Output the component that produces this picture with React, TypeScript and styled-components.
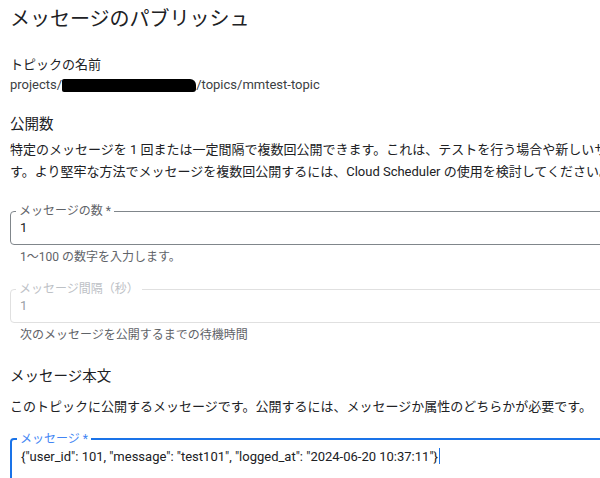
import styled, { createGlobalStyle } from 'styled-components';

const GlobalStyle = createGlobalStyle`
  html, body {
    margin: 0;
    padding: 0;
    background: #fff;
    overflow: hidden;
  }
  body {
    font-family: Roboto, "Noto Sans CJK JP", sans-serif;
    color: #202124;
  }
`;

const Page = styled.div`
  width: 720px;
  padding: 5px 0 0 10px;
  display: flex;
  flex-direction: column;
`;

const Title = styled.h1`
  margin: 0;
  font-size: 20px;
  line-height: 28px;
  font-weight: 400;
`;

const FieldName = styled.div`
  margin-top: 22px;
  font-size: 13px;
  line-height: 20px;
`;

const FieldValue = styled.div`
  font-size: 13px;
  line-height: 20px;
  color: #3c4043;
  display: flex;
  align-items: center;
`;

const Redacted = styled.span`
  display: inline-block;
  width: 134px;
  height: 13px;
  margin-top: 1px;
  background: #000;
  border-radius: 2px 6px 3px 2px;
`;

const SectionTitle = styled.h2<{ $gap: number }>`
  margin: ${(p) => p.$gap}px 0 0;
  font-size: 14.5px;
  line-height: 24px;
  font-weight: 400;
`;

const Description = styled.p<{ $gap?: number }>`
  margin: ${(p) => p.$gap ?? 2}px 0 0;
  font-size: 13px;
  line-height: 22px;
  white-space: nowrap;
`;

const Outline = styled.fieldset<{ $state: 'normal' | 'disabled' | 'focused'; $gap: number }>`
  margin: ${(p) => p.$gap}px 0 0;
  width: 700px;
  box-sizing: border-box;
  padding: 0 9px ${(p) => (p.$state === 'focused' ? 22 : 8)}px;
  border-radius: 4px;
  border: ${(p) =>
    p.$state === 'focused'
      ? '2px solid #1a73e8'
      : p.$state === 'disabled'
        ? '1px solid #e0e0e0'
        : '1px solid #80868b'};
`;

const Legend = styled.legend<{ $state: 'normal' | 'disabled' | 'focused' }>`
  padding: 0 3px;
  margin-left: -4px;
  font-size: 12px;
  line-height: 14px;
  color: ${(p) =>
    p.$state === 'focused' ? '#4285f4' : p.$state === 'disabled' ? '#bdc1c6' : '#5f6368'};
`;

const InputText = styled.div<{ $disabled?: boolean }>`
  margin-top: 2px;
  font-size: 13px;
  line-height: 16px;
  white-space: nowrap;
  color: ${(p) => (p.$disabled ? '#9aa0a6' : '#202124')};
`;

const Caret = styled.span`
  display: inline-block;
  width: 1px;
  height: 16px;
  margin-left: 1px;
  vertical-align: -3px;
  background: #1a73e8;
`;

const Hint = styled.div`
  margin: 4px 0 0 10px;
  font-size: 12px;
  line-height: 16px;
  color: #5f6368;
`;

export default function App() {
  return (
    <>
      <GlobalStyle />
      <Page>
        <Title>メッセージのパブリッシュ</Title>

        <FieldName>トピックの名前</FieldName>
        <FieldValue>
          projects/<Redacted />/topics/mmtest-topic
        </FieldValue>

        <SectionTitle $gap={18}>公開数</SectionTitle>
        <Description>
          特定のメッセージを 1 回または一定間隔で複数回公開できます。これは、テストを行う場合や新しいサブスクリプションの作成を試す場合に便利で
          <br />
          す。より堅牢な方法でメッセージを複数回公開するには、Cloud Scheduler の使用を検討してください。
        </Description>

        <Outline $state="normal" $gap={21}>
          <Legend $state="normal">メッセージの数 *</Legend>
          <InputText>1</InputText>
        </Outline>
        <Hint>1〜100 の数字を入力します。</Hint>

        <Outline $state="disabled" $gap={17}>
          <Legend $state="disabled">メッセージ間隔（秒）</Legend>
          <InputText $disabled>1</InputText>
        </Outline>
        <Hint>次のメッセージを公開するまでの待機時間</Hint>

        <SectionTitle $gap={22}>メッセージ本文</SectionTitle>
        <Description $gap={7}>
          このトピックに公開するメッセージです。公開するには、メッセージか属性のどちらかが必要です。
        </Description>

        <Outline $state="focused" $gap={14}>
          <Legend $state="focused">メッセージ *</Legend>
          <InputText>
            {'{"user_id": 101, "message": "test101", "logged_at": "2024-06-20 10:37:11"}'}
            <Caret />
          </InputText>
        </Outline>
      </Page>
    </>
  );
}
